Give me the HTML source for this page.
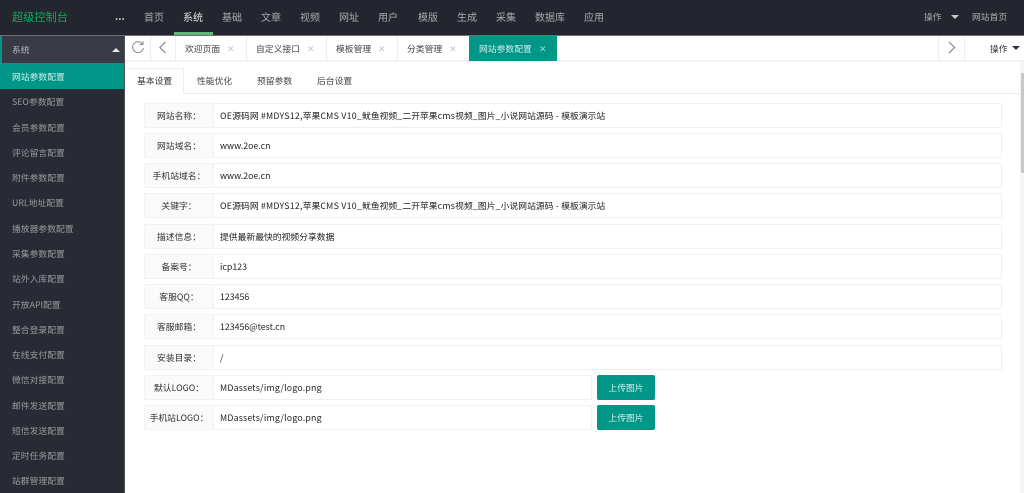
<!DOCTYPE html>
<html><head><meta charset="utf-8"><style>
html,body{margin:0;padding:0;width:1024px;height:493px;overflow:hidden;background:#fff}
body{position:relative;font-family:"Noto Sans CJK SC","Liberation Sans",sans-serif;font-size:9px;color:#333;filter:blur(0.25px)}
div{position:absolute;white-space:nowrap}
.e{letter-spacing:.25px;white-space:pre}
.top{left:0;top:0;width:1024px;height:35px;background:#23262e}
.n{top:10px;line-height:14px;font-size:10px;color:#a9abaf}
.side{left:0;top:36px;width:124px;height:457px;background:#282b33;overflow:hidden}
.s{left:12px;line-height:14px;font-size:8.8px;color:#989a9f}
.t{top:42px;line-height:14px;font-size:8.8px;color:#444}
.x{top:42px;line-height:14px;font-size:9px;color:#c4c4c4;font-family:"Liberation Sans","DejaVu Sans",sans-serif}
.v{top:36px;width:1px;height:25px;background:#eeeeee}
.l{left:144px;height:23px;background:#fafafa;border:1px solid #f2f2f2;border-right:0;border-radius:2px 0 0 2px;box-sizing:content-box;width:68px;text-align:center;line-height:23.5px;font-size:8.8px;color:#333}
.i{left:213px;height:23px;border:1px solid #f0f0f0;border-radius:2px;line-height:23.5px;font-size:8.8px;color:#222;padding-left:6px;box-sizing:content-box;width:781px}
.i.k{width:371px;letter-spacing:.19px}
.b{left:597px;width:58px;height:25px;background:#009688;border-radius:2px;color:#d8efec;text-align:center;line-height:26px;font-size:8.8px}
.st{top:74px;line-height:14px;font-size:8.8px;color:#444}
</style></head><body>
<div class="top"></div>
<div style="left:0;top:35px;width:1024px;height:1px;background:#6f7075"></div>
<div style="left:12px;top:10px;font-size:11.2px;line-height:14px;color:#14a85b">超级控制台</div>
<div style="left:115px;top:9px;font-size:10px;line-height:14px;color:#d5d5d5;font-weight:bold">...</div>
<div class="n" style="left:144px">首页</div>
<div class="n" style="left:183px;color:#e2e3e4">系统</div>
<div style="left:174px;top:32px;width:39px;height:3px;background:#5fb878"></div>
<div class="n" style="left:222px">基础</div>
<div class="n" style="left:261px">文章</div>
<div class="n" style="left:300px">视频</div>
<div class="n" style="left:339px">网址</div>
<div class="n" style="left:378px">用户</div>
<div class="n" style="left:418px">模版</div>
<div class="n" style="left:457px">生成</div>
<div class="n" style="left:496px">采集</div>
<div class="n" style="left:535px">数据库</div>
<div class="n" style="left:584px">应用</div>
<div class="n" style="left:924px;top:10px;font-size:8.8px">操作</div>
<div style="left:951px;top:15px;width:0;height:0;border:4px solid transparent;border-top:4px solid #c8c8c8;border-bottom:0"></div>
<div class="n" style="left:972px;font-size:8.8px">网站首页</div>

<div class="side"></div>
<div style="left:0;top:36px;width:124px;height:27px;background:#383a45"></div>
<div style="left:0;top:36px;width:2px;height:27px;background:#009688"></div>
<div class="s" style="top:43px;color:#b5b6ba">系统</div>
<div style="left:112px;top:48px;width:0;height:0;border:4px solid transparent;border-bottom:4px solid #e6e6e6;border-top:0"></div>
<div style="left:0;top:63px;width:124px;height:26px;background:#009688"></div>
<div class="s" style="top:70px;color:#d3ece9">网站参数配置</div>
<div class="s" style="top:95px">SEO参数配置</div>
<div class="s" style="top:120.5px">会员参数配置</div>
<div class="s" style="top:146px">评论留言配置</div>
<div class="s" style="top:171px">附件参数配置</div>
<div class="s" style="top:196px">URL地址配置</div>
<div class="s" style="top:221.5px">播放器参数配置</div>
<div class="s" style="top:247px">采集参数配置</div>
<div class="s" style="top:272px">站外入库配置</div>
<div class="s" style="top:297.5px">开放API配置</div>
<div class="s" style="top:323px">整合登录配置</div>
<div class="s" style="top:348px">在线支付配置</div>
<div class="s" style="top:373px">微信对接配置</div>
<div class="s" style="top:398.5px">邮件发送配置</div>
<div class="s" style="top:423.5px">短信发送配置</div>
<div class="s" style="top:449px">定时任务配置</div>
<div class="s" style="top:474px">站群管理配置</div>
<div style="left:124px;top:36px;width:1px;height:457px;background:#50525a"></div>

<div style="left:125px;top:60px;width:899px;height:2px;background:#f3f3f3"></div>
<svg style="position:absolute;left:131px;top:40px" width="14" height="15" viewBox="0 0 14 15" fill="none" stroke="#8a8a8a" stroke-width="1"><path d="M11.6 4.2A5.4 5.4 0 1 0 12.4 8"/><path d="M12 1.2V4.6H8.6"/></svg>
<svg style="position:absolute;left:158px;top:41px" width="10" height="13" viewBox="0 0 10 13" fill="none" stroke="#777" stroke-width="1"><path d="M7.5 1L1.8 6.5L7.5 12"/></svg>
<svg style="position:absolute;left:947px;top:41px" width="10" height="13" viewBox="0 0 10 13" fill="none" stroke="#777" stroke-width="1"><path d="M2 1L7.7 6.5L2 12"/></svg>
<div class="v" style="left:150px"></div><div class="v" style="left:175px"></div>
<div class="v" style="left:246px"></div><div class="v" style="left:326px"></div>
<div class="v" style="left:397px"></div>
<div class="t" style="left:185px">欢迎页面</div><div class="x" style="left:227px">✕</div>
<div class="t" style="left:256px">自定义接口</div><div class="x" style="left:307px">✕</div>
<div class="t" style="left:336px">模板管理</div><div class="x" style="left:378px">✕</div>
<div class="t" style="left:407px">分类管理</div><div class="x" style="left:449px">✕</div>
<div style="left:469px;top:36px;width:88px;height:25px;background:#009688"></div>
<div class="t" style="left:479px;color:#d3ece9">网站参数配置</div><div class="x" style="left:539px;color:#a5d5cf">✕</div>
<div class="v" style="left:938px"></div><div class="v" style="left:964px"></div>
<div class="t" style="left:990px;color:#333">操作</div>
<div style="left:1012px;top:46px;width:0;height:0;border:4px solid transparent;border-top:4px solid #333;border-bottom:0"></div>

<div style="left:1020px;top:62px;width:4px;height:431px;background:#f4f4f4"></div>
<div style="left:1021px;top:73px;width:3px;height:100px;background:#c8c8c8"></div>

<div style="left:125px;top:93px;width:895px;height:1px;background:#eeeeee"></div>
<div style="left:125px;top:68px;width:59px;height:26px;background:#fff;border:1px solid #eeeeee;border-left:0;border-bottom:0;box-sizing:border-box"></div>
<div class="st" style="left:137px;color:#333">基本设置</div>
<div class="st" style="left:197px">性能优化</div>
<div class="st" style="left:257px">预留参数</div>
<div class="st" style="left:317px">后台设置</div>

<div class="l" style="top:103px">网站名称：</div><div class="i" style="top:103px"><span class="e">OE</span>源码网<span class="e"> #MDYS12,</span>苹果<span class="e">CMS V10_</span>鱿鱼视频<span class="e">_</span>二开苹果<span class="e">cms</span>视频<span class="e">_</span>图片<span class="e">_</span>小说网站源码<span class="e"> - </span>模板演示站</div>
<div class="l" style="top:133px">网站域名：</div><div class="i" style="top:133px">www.2oe.cn</div>
<div class="l" style="top:163px">手机站域名：</div><div class="i" style="top:163px">www.2oe.cn</div>
<div class="l" style="top:193px">关键字：</div><div class="i" style="top:193px"><span class="e">OE</span>源码网<span class="e"> #MDYS12,</span>苹果<span class="e">CMS V10_</span>鱿鱼视频<span class="e">_</span>二开苹果<span class="e">cms</span>视频<span class="e">_</span>图片<span class="e">_</span>小说网站源码<span class="e"> - </span>模板演示站</div>
<div class="l" style="top:224px">描述信息：</div><div class="i" style="top:224px">提供最新最快的视频分享数据</div>
<div class="l" style="top:254px">备案号：</div><div class="i" style="top:254px">icp123</div>
<div class="l" style="top:284px">客服QQ：</div><div class="i" style="top:284px">123456</div>
<div class="l" style="top:314px">客服邮箱：</div><div class="i" style="top:314px">123456@test.cn</div>
<div class="l" style="top:345px">安装目录：</div><div class="i" style="top:345px">/</div>
<div class="l" style="top:375px">默认LOGO：</div><div class="i k" style="top:375px">MDassets/img/logo.png</div><div class="b" style="top:375px">上传图片</div>
<div class="l" style="top:405px">手机站LOGO：</div><div class="i k" style="top:405px">MDassets/img/logo.png</div><div class="b" style="top:405px">上传图片</div>
</body></html>
